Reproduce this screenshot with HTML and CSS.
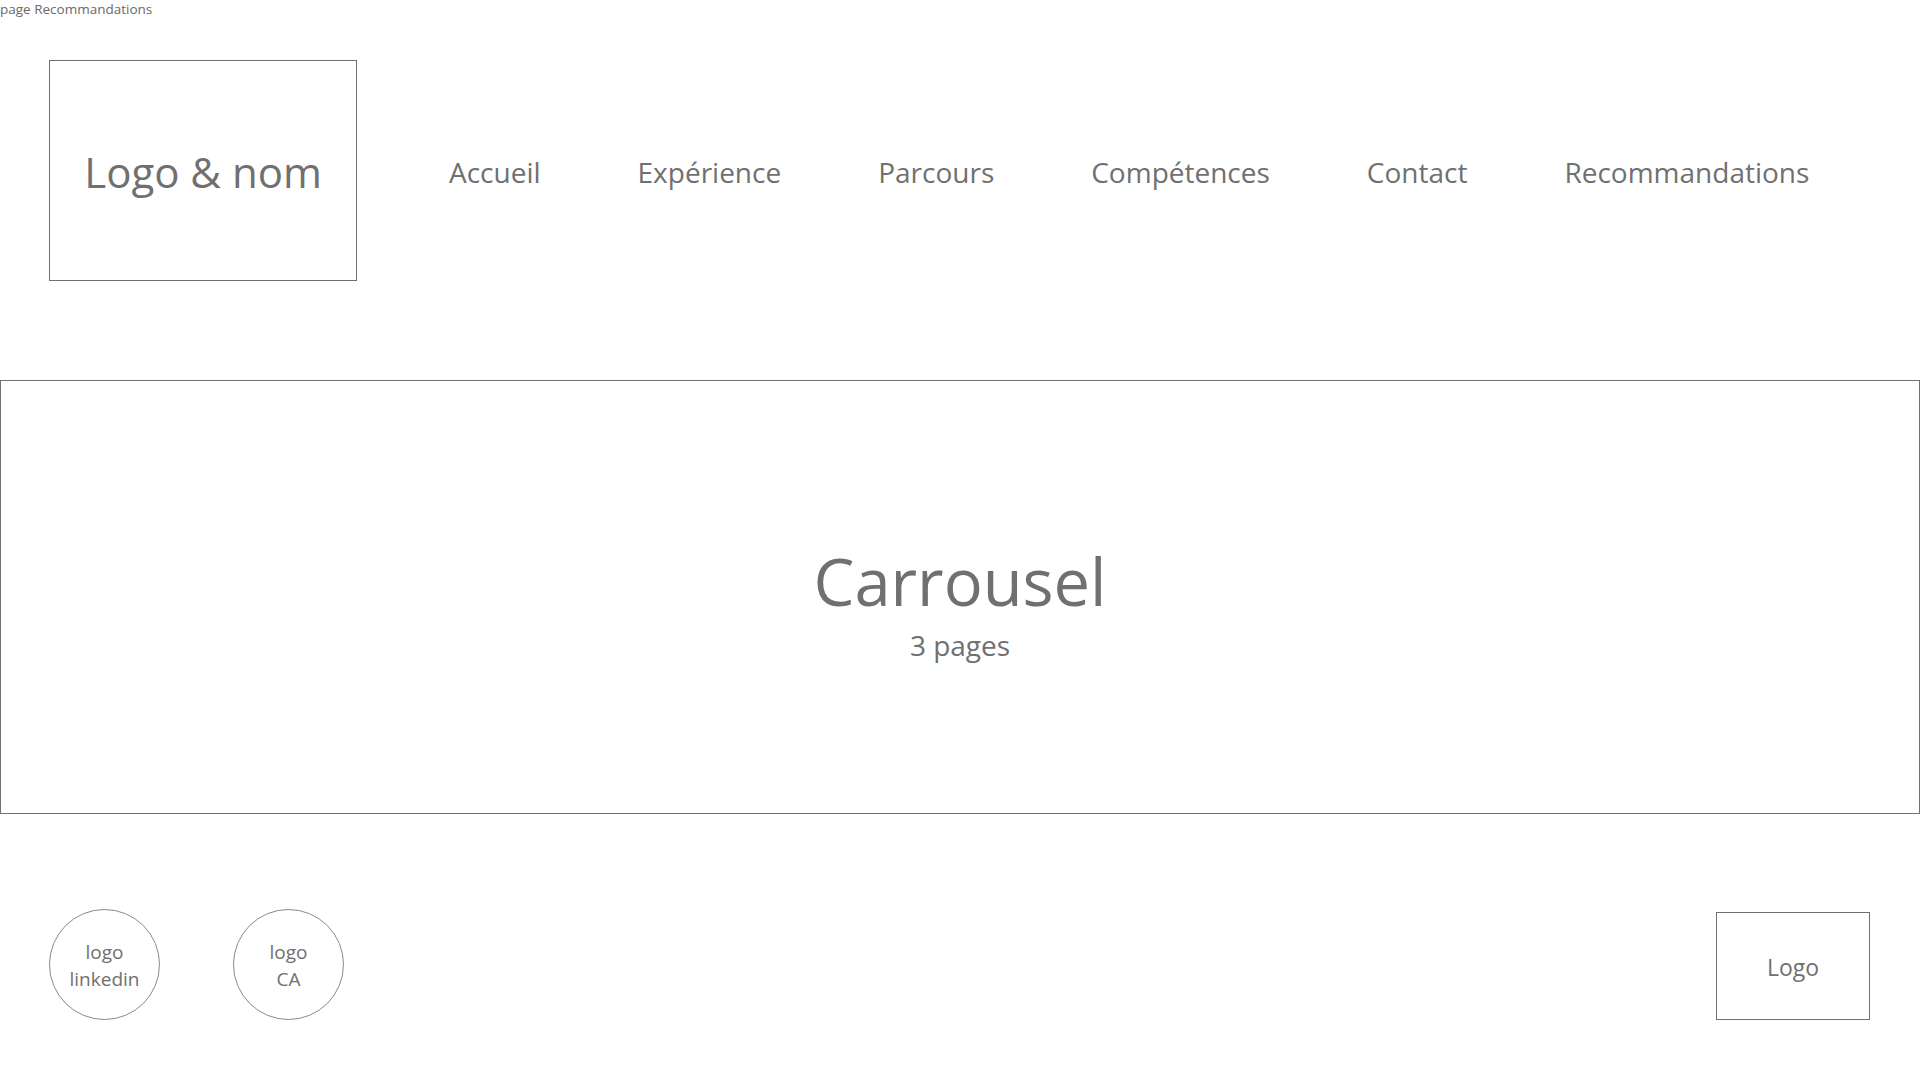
FILE: index.html
```html
<!DOCTYPE html>
<html lang="fr">
<head>
<meta charset="utf-8">
<title>page Recommandations</title>
<link rel="stylesheet" href="styles.css">
</head>
<body>
<div class="page-label">page Recommandations</div>
<header class="header">
  <div class="brand">Logo &amp; nom</div>
  <nav class="nav">
    <a class="nav-item" href="#">Accueil</a>
    <a class="nav-item" href="#">Expérience</a>
    <a class="nav-item" href="#">Parcours</a>
    <a class="nav-item" href="#">Compétences</a>
    <a class="nav-item" href="#">Contact</a>
    <a class="nav-item" href="#">Recommandations</a>
  </nav>
</header>
<section class="carousel">
  <div class="carousel-title">Carrousel</div>
  <div class="carousel-sub">3 pages</div>
</section>
<footer class="footer">
  <div class="socials">
    <div class="circle">logo<br>linkedin</div>
    <div class="circle">logo<br>CA</div>
  </div>
  <div class="footer-logo">Logo</div>
</footer>
</body>
</html>
```
FILE: styles.css
```css
* { box-sizing: border-box; }
html, body { margin: 0; padding: 0; background: #ffffff; }
body {
  font-family: "Open Sans", "Noto Sans", "Liberation Sans", sans-serif;
  color: #707070;
  width: 1920px;
  height: 1080px;
  overflow: hidden;
}
.page-label {
  font-size: 13.5px;
  line-height: 18px;
  height: 18px;
  color: #6a6a6a;
}
.header {
  display: flex;
  align-items: center;
  margin-top: 42px;
  padding-left: 49px;
}
.brand {
  width: 308px;
  height: 221px;
  border: 1px solid #707070;
  display: flex;
  align-items: center;
  justify-content: center;
  font-size: 42px;
  padding-top: 2px;
}
.nav {
  display: flex;
  align-items: center;
  gap: 97px;
  margin-left: 92px;
  padding-top: 2px;
}
.nav-item {
  font-size: 28px;
  color: #707070;
  text-decoration: none;
}
.carousel {
  margin-top: 99px;
  height: 434px;
  border: 1px solid #707070;
  display: flex;
  flex-direction: column;
  align-items: center;
  justify-content: center;
  padding-top: 12px;
}
.carousel-title {
  font-size: 65px;
  line-height: 80px;
}
.carousel-sub {
  font-size: 28px;
  line-height: 40px;
  margin-top: 4px;
}
.footer {
  margin-top: 95px;
  padding: 0 50px 0 49px;
  display: flex;
  justify-content: space-between;
  align-items: flex-end;
}
.socials {
  display: flex;
  gap: 73px;
}
.circle {
  width: 111px;
  height: 111px;
  border: 1px solid #8a8a8a;
  border-radius: 50%;
  display: flex;
  align-items: center;
  justify-content: center;
  text-align: center;
  font-size: 19px;
  line-height: 27px;
  padding-top: 2px;
}
.footer-logo {
  width: 154px;
  height: 108px;
  border: 1px solid #707070;
  display: flex;
  align-items: center;
  justify-content: center;
  font-size: 23px;
  padding-top: 2px;
}
```
